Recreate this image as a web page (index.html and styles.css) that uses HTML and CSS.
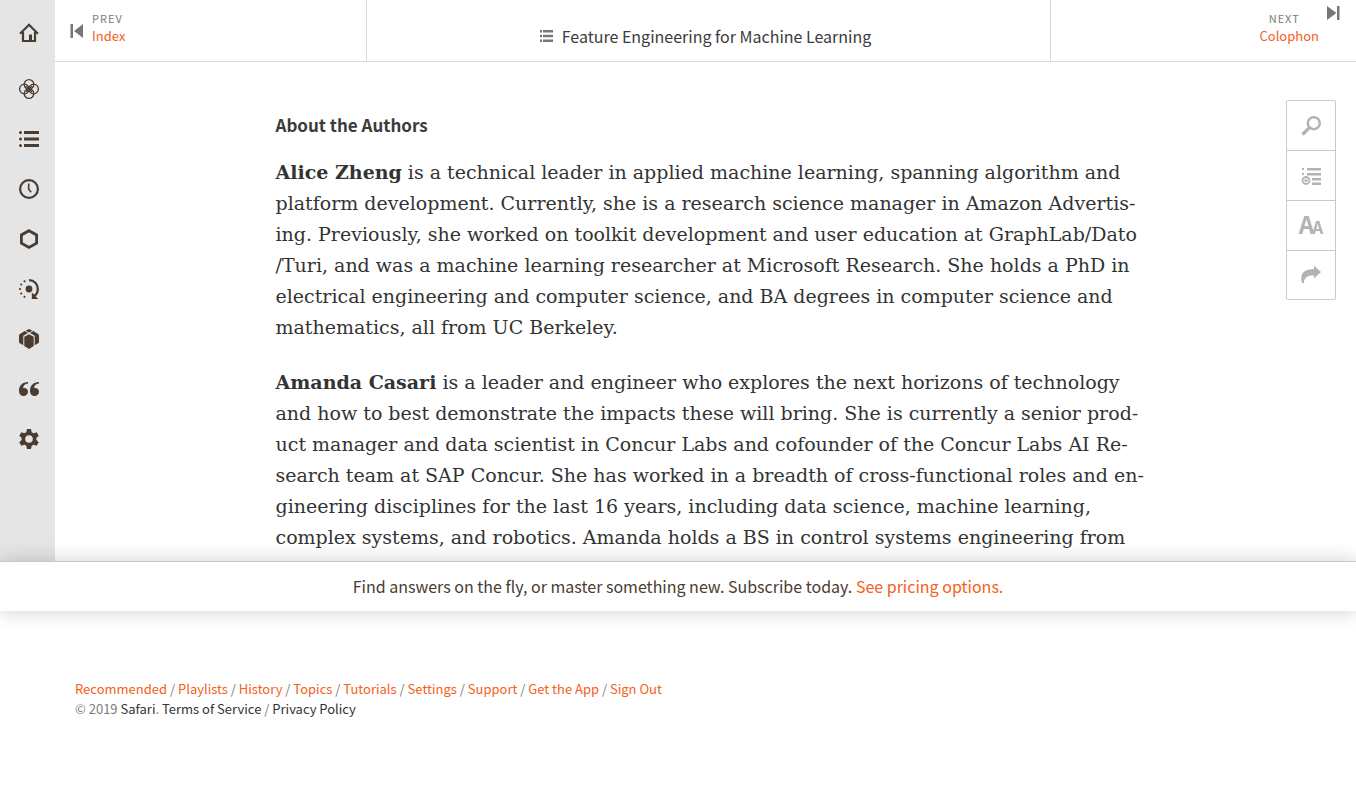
FILE: index.html
```html
<!DOCTYPE html>
<html lang="en">
<head>
<meta charset="utf-8">
<meta name="viewport" content="width=device-width, initial-scale=1">
<title>Feature Engineering for Machine Learning</title>
<link rel="stylesheet" href="styles.css">
</head>
<body>
<div class="reader">
  <nav class="sidebar" aria-label="Main">
    <a class="side-link side-home" href="#" aria-label="Home"><svg viewBox="0 0 20 20"><path d="M4 9v9h12V9M1 10.800 10 1.800l9 9" fill="none" stroke="currentColor" stroke-width="2.200"/><path d="M10 11.500h3V18h-3z"/></svg></a>
    <a class="side-link" href="#" aria-label="Recommended"><svg class="outline" viewBox="0 0 20 20" stroke-width="1.300"><circle cx="10" cy="5.400" r="4.800"/><circle cx="10" cy="14.600" r="4.800"/><circle cx="5.400" cy="10" r="4.800"/><circle cx="14.600" cy="10" r="4.800"/><path d="m7 7 6 6m0-6-6 6"/></svg></a>
    <a class="side-link" href="#" aria-label="Playlists"><svg viewBox="0 0 20 20"><path d="M5 2h15v3H5zM5 8.500h15v3H5zM5 15h15v3H5z"/><circle cx="1.500" cy="3.500" r="1.500"/><circle cx="1.500" cy="10" r="1.500"/><circle cx="1.500" cy="16.500" r="1.500"/></svg></a>
    <a class="side-link" href="#" aria-label="History"><svg class="outline" viewBox="0 0 20 20"><circle cx="10" cy="10" r="8.900" stroke-width="2.200"/><path d="M9.700 4.500v5.700l2.500 3" stroke-width="1.600"/></svg></a>
    <a class="side-link" href="#" aria-label="Topics"><svg viewBox="0 0 20 20"><path d="m10 1.700 7.600 4.200v8.300L10 18.500l-7.600-4.300V5.900z" fill="none" stroke="currentColor" stroke-width="2.800"/></svg></a>
    <a class="side-link" href="#" aria-label="Tutorials"><svg viewBox="0 0 20 20"><path d="M10 1.200c5.200 0 8.800 3.800 8.800 8.700 0 3.300-1.600 5.800-4 7.200" fill="none" stroke="currentColor" stroke-width="2.300"/><path d="M12.800 13.500V20h6.500z"/><circle cx="10" cy="10" r="3.400"/><circle cx="5.500" cy="2.300" r="1.100"/><circle cx="2.200" cy="5.500" r="1.100"/><circle cx="1" cy="10" r="1.100"/><circle cx="2.200" cy="14.500" r="1.100"/><circle cx="5.500" cy="17.800" r="1.100"/></svg></a>
    <a class="side-link" href="#" aria-label="Offers and deals"><svg viewBox="0 0 20 20"><path d="m10 0 3.500 1.700L10 3.400 6.500 1.700zM5.700 2.100 9 4 4.300 6.800v9.400L.9 14.300Q0 13.800 0 13V6.500Q0 5.500.9 5zM14.300 2.100 11 4l4.700 2.800v9.400l3.400-1.900q.9-.5.900-1.300V6.500q0-1-.9-1.500zM10 5.300l4.700 2.500v9.300L10 20l-4.700-2.900V7.800z"/></svg></a>
    <a class="side-link" href="#" aria-label="Highlights"><svg viewBox="0 0 20 20"><path d="M9 3v1.600C6 5 4 7 4.100 9.100c2.600-.7 4.900 1 4.900 3.700C9 15.300 7.100 17 4.600 17 1.700 17 0 14.800 0 11.500 0 6.500 3.700 3 9 3zM20 3v1.600c-3 .4-5 2.400-4.900 4.500 2.600-.7 4.900 1 4.900 3.700 0 2.500-1.900 4.200-4.400 4.200-2.900 0-4.600-2.200-4.600-5.500C11 6.500 14.700 3 20 3z"/></svg></a>
    <a class="side-link" href="#" aria-label="Settings"><svg viewBox="0 0 20 20"><path fill-rule="evenodd" d="M8 0h4l.7 3.200 2 1.100 3-1.100 2 3.500L17.400 9v2l2.300 2.300-2 3.500-3-1.100-2 1.100L12 20H8l-.7-3.200-2-1.100-3 1.100-2-3.500L2.600 11V9L.3 6.700l2-3.500 3 1.100 2-1.100zM10 6.200a3.800 3.800 0 1 0 0 7.600 3.800 3.800 0 0 0 0-7.600z"/></svg></a>
  </nav>
  <main class="main">
    <header class="topbar">
      <a class="prev" href="#">
        <svg class="skip" viewBox="0 0 14 14"><path d="M.5 0H3v14H.5zM13 0v14L4 7z"/></svg>
        <span class="step"><span class="step-label">PREV</span><span class="step-title">Index</span></span>
      </a>
      <a class="book" href="#">
        <svg class="book-icon" viewBox="0 0 13 12"><path d="M0 0h2v2.500H0zM3 0h10v2.500H3zM0 4.700h2v2.500H0zM3 4.700h10v2.500H3zM0 9.500h2V12H0zM3 9.500h10V12H3z"/></svg>
        <span>Feature Engineering for Machine Learning</span>
      </a>
      <a class="next" href="#">
        <span class="step"><span class="step-label">NEXT</span><span class="step-title">Colophon</span></span>
        <svg class="skip" viewBox="0 0 14 14"><path d="M10 0h2.500v14H10zM0 0v14l9.500-7z"/></svg>
      </a>
    </header>
    <article class="chapter">
      <h1 class="chapter-title">About the Authors</h1>
      <p><strong>Alice Zheng</strong> is a technical leader in applied machine learning, spanning algorithm and platform development. Currently, she is a research science manager in Amazon Advertis&shy;ing. Previously, she worked on toolkit development and user education at GraphLab/Dato<wbr>/Turi, and was a machine learning researcher at Microsoft Research. She holds a PhD in electrical engineering and computer science, and BA degrees in computer science and mathematics, all from UC Berkeley.</p>
      <p><strong>Amanda Casari</strong> is a leader and engineer who explores the next horizons of technology and how to best demonstrate the impacts these will bring. She is currently a senior prod&shy;uct manager and data scientist in Concur Labs and cofounder of the Concur Labs AI Re&shy;search team at SAP Concur. She has worked in a breadth of cross-functional roles and en&shy;gineering disciplines for the last 16 years, including data science, machine learning, complex systems, and robotics. Amanda holds a BS in control systems engineering from</p>
    </article>
    <div class="tools">
      <button class="tool" type="button" aria-label="Search"><svg viewBox="0 0 20 20"><circle cx="12.800" cy="7.200" r="6" fill="none" stroke="currentColor" stroke-width="2.500"/><path d="M8.500 11.500 1.500 18.500" stroke="currentColor" stroke-width="3.200"/></svg></button>
      <button class="tool" type="button" aria-label="Add to playlist"><svg viewBox="0 0 20 20"><path d="M1 2h2v2H1zM6 2h14v2.500H6zM1 7h2v2H1zM6 7h14v2.500H6zM11 12h9v2.500h-9zM11 16.500h9V19h-9z"/><circle cx="5" cy="14.500" r="3.500" fill="none" stroke="currentColor" stroke-width="1.800"/><path d="M5 12.800v3.400M3.300 14.500h3.400" stroke="currentColor" stroke-width="1.300"/></svg></button>
      <button class="tool tool-type" type="button" aria-label="Text size"><span class="type-big">A</span><span class="type-small">A</span></button>
      <button class="tool" type="button" aria-label="Share"><svg viewBox="0 0 20 20"><path d="M13 .500 20 7l-7 6.500V10.500C7 10 2.800 12.500 3 18H1C-1.500 9.500 2 4 13 4z"/></svg></button>
    </div>
  </main>
</div>
<aside class="promo">Find answers on the fly, or master something new. Subscribe today. <a href="#">See pricing options.</a></aside>
<footer class="footer">
  <div><a href="#">Recommended</a> / <a href="#">Playlists</a> / <a href="#">History</a> / <a href="#">Topics</a> / <a href="#">Tutorials</a> / <a href="#">Settings</a> / <a href="#">Support</a> / <a href="#">Get the App</a> / <a href="#">Sign Out</a></div>
  <div class="legal">© 2019 <a href="#">Safari</a>. <a href="#">Terms of Service</a> / <a href="#">Privacy Policy</a></div>
</footer>
</body>
</html>
```
FILE: styles.css
```css
* { box-sizing: border-box; }
body {
  margin: 0;
  background: #fff;
  color: #333;
  font-family: "Noto Sans CJK SC", "Open Sans", sans-serif;
}
a { color: #f56020; text-decoration: none; }
svg { display: block; fill: currentColor; flex: none; overflow: visible; }
.outline { fill: none; stroke: currentColor; }

.reader { display: flex; }
.sidebar {
  flex: none;
  width: 55px;
  padding: 8px 0 0 3px;
  background: #e5e5e5;
}
.side-link {
  display: flex;
  align-items: center;
  justify-content: center;
  height: 50px;
  color: #4a3c31;
}
.side-link svg { width: 20px; height: 20px; }
.side-home { margin-bottom: 6px; }

.main { position: relative; flex: 1; min-width: 0; }
.topbar {
  display: grid;
  grid-template-columns: 311fr 685fr 305fr;
  height: 62px;
  border-bottom: 1px solid #d9d9d9;
}
.prev, .book, .next { display: flex; }
.prev { gap: 8px; padding: 10px 15px; }
.prev .skip { margin-top: 14px; }
.book {
  align-items: center;
  justify-content: center;
  gap: 9px;
  padding: 10px 6px 0 0;
  border: solid #d9d9d9;
  border-width: 0 1px;
  color: #3b3b3b;
  font-size: 16px;
  line-height: 24px;
}
.book-icon { width: 13px; height: 12px; color: #777; }
.next { justify-content: flex-end; gap: 8px; padding: 10px 15px; text-align: center; }
.next .skip { margin-top: -4px; }
.next .step-label { margin-right: 10px; }
.skip { width: 14px; height: 14px; color: #777; }
.step { display: flex; flex-direction: column; }
.step-label { color: #7c7c75; font-size: 11px; line-height: 16px; letter-spacing: 1px; }
.step-title { font-size: 13px; line-height: 20px; }

.chapter {
  max-width: 880px;
  margin: 0 auto;
  padding: 51px 0 8px 10px;
  font-family: "DejaVu Serif", serif;
  font-size: 19px;
  line-height: 31px;
}
.chapter-title {
  margin: 0 0 20px;
  color: #3b3b3b;
  font-family: "Noto Sans CJK SC", "Open Sans", sans-serif;
  font-size: 17px;
  font-weight: 700;
  line-height: 24px;
}
.chapter p { margin: 0 0 24px; }
.chapter p:last-child { margin: 0; }

.tools {
  position: absolute;
  top: 100px;
  right: 20px;
  width: 50px;
  border: 1px solid #c9c9c9;
  border-radius: 2px;
  background: #fff;
}
.tool {
  display: flex;
  align-items: center;
  justify-content: center;
  width: 100%;
  height: 50px;
  padding: 0;
  border: 0;
  background: none;
  color: #b3b3b3;
}
.tool + .tool { border-top: 1px solid #c9c9c9; }
.tool:first-child, .tool:last-child { height: 49px; }
.tool svg { width: 20px; height: 20px; }
.tool-type { align-items: baseline; font-family: "Noto Sans CJK SC", sans-serif; font-weight: 700; line-height: 46px; }
.type-big { font-size: 24px; }
.type-small { font-size: 17px; margin-left: -2px; }

.promo {
  position: relative;
  padding: 12px 20px;
  border-top: 1px solid #c9c9c9;
  background: #fff;
  box-shadow: 0 0 20px rgba(0, 0, 0, 0.2);
  color: #4a3c31;
  font-size: 16px;
  line-height: 25px;
  text-align: center;
}
.footer {
  padding: 68px 75px;
  color: #7c7c7c;
  font-size: 13px;
  line-height: 20px;
}
.legal a { color: #333; }
```
